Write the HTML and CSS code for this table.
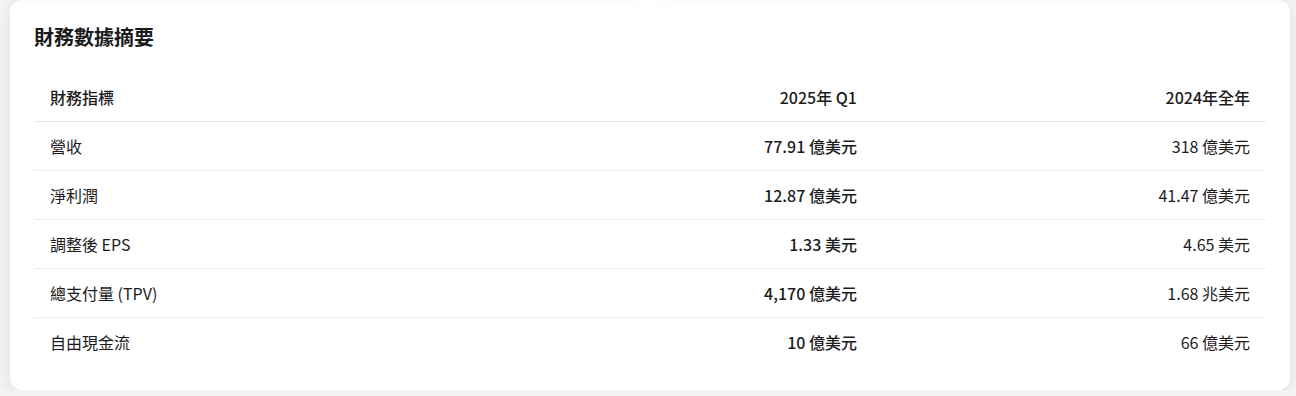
FILE: index.html
```html
<!DOCTYPE html>
<html lang="zh-Hant">
<head>
<meta charset="utf-8">
<title>財務數據摘要</title>
<link rel="stylesheet" href="styles.css">
</head>
<body>
<div class="page">
  <div class="top-row">
    <div class="card card-top"></div>
    <div class="card card-top"></div>
  </div>
  <section class="card summary">
    <h2 class="summary-title">財務數據摘要</h2>
    <table class="fin-table">
      <colgroup>
        <col class="col-name">
        <col class="col-val">
        <col class="col-val">
      </colgroup>
      <thead>
        <tr>
          <th class="cell-name">財務指標</th>
          <th class="cell-num">2025年 Q1</th>
          <th class="cell-num">2024年全年</th>
        </tr>
      </thead>
      <tbody>
        <tr>
          <td class="cell-name">營收</td>
          <td class="cell-num strong">77.91 億美元</td>
          <td class="cell-num">318 億美元</td>
        </tr>
        <tr>
          <td class="cell-name">淨利潤</td>
          <td class="cell-num strong">12.87 億美元</td>
          <td class="cell-num">41.47 億美元</td>
        </tr>
        <tr>
          <td class="cell-name">調整後 EPS</td>
          <td class="cell-num strong">1.33 美元</td>
          <td class="cell-num">4.65 美元</td>
        </tr>
        <tr>
          <td class="cell-name">總支付量 (TPV)</td>
          <td class="cell-num strong">4,170 億美元</td>
          <td class="cell-num">1.68 兆美元</td>
        </tr>
        <tr>
          <td class="cell-name">自由現金流</td>
          <td class="cell-num strong">10 億美元</td>
          <td class="cell-num">66 億美元</td>
        </tr>
      </tbody>
    </table>
  </section>
</div>
</body>
</html>
```

FILE: styles.css
```css
* { box-sizing: border-box; }

html, body {
  margin: 0;
  padding: 0;
  background: #f3f3f4;
  font-family: "Noto Sans CJK TC", "Noto Sans", sans-serif;
  color: #1c1c1e;
}

.page {
  padding: 0 6px 0 10px;
  display: flex;
  flex-direction: column;
  gap: 14px;
}

.top-row {
  display: grid;
  grid-template-columns: 1fr 1fr;
  gap: 16px;
  height: 80px;
  margin-top: -94px;
}

.card {
  background: #ffffff;
  border-radius: 12px;
  box-shadow: 0 4px 16px rgba(0, 0, 0, 0.08);
}

.card-top {
  position: relative;
  z-index: 1;
  box-shadow: 0 6px 22px rgba(0, 0, 0, 0.1);
}

.summary {
  padding: 22px 24px 24px;
}

.summary-title {
  margin: 0 0 21px;
  font-size: 20px;
  line-height: 30px;
  font-weight: 700;
  color: #1a1a1a;
}

.fin-table {
  width: 100%;
  border-collapse: collapse;
  font-size: 16px;
  line-height: 24px;
}

.col-name { width: 36.2%; }
.col-val { width: 31.9%; }

.fin-table th,
.fin-table td {
  padding: 12px 16px;
  border-bottom: 1px solid #ececec;
  font-weight: 400;
}

.fin-table th {
  font-weight: 500;
  border-bottom-color: #e6e6e6;
}

.fin-table tbody tr:last-child td {
  border-bottom: none;
}

.cell-name { text-align: left; }
.cell-num { text-align: right; }

.fin-table td.strong { font-weight: 500; }
```
